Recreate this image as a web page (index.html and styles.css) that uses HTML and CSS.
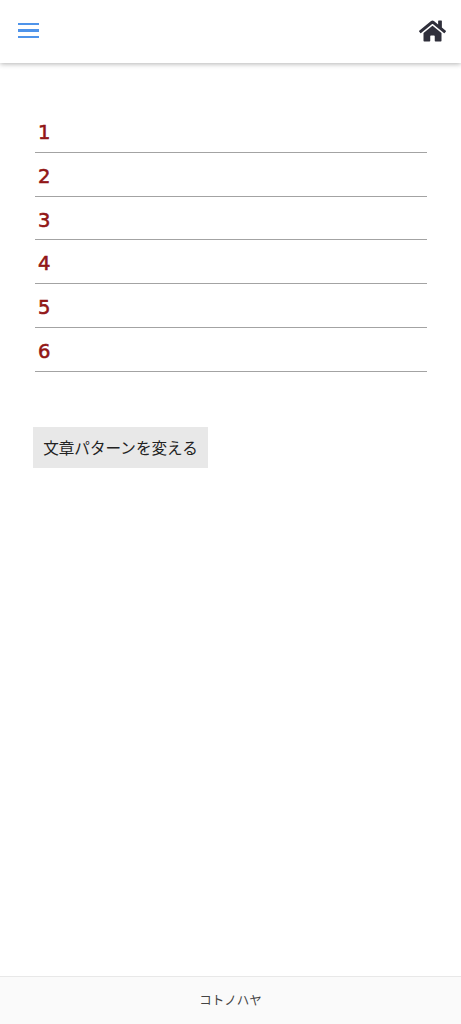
FILE: index.html
```html
<!DOCTYPE html>
<html lang="ja">
<head>
<meta charset="utf-8">
<title>コトノハヤ</title>
<link rel="stylesheet" href="styles.css">
</head>
<body>
<div class="page">
  <header class="topbar">
    <div class="burger"><span></span><span></span><span></span></div>
    <svg class="home" viewBox="0 0 576 512" aria-hidden="true"><path fill="#2f2f3b" d="M280.37 148.26L96 300.11V464a16 16 0 0 0 16 16l112.06-.29a16 16 0 0 0 15.92-16V368a16 16 0 0 1 16-16h64a16 16 0 0 1 16 16v95.64a16 16 0 0 0 16 16.05L464 480a16 16 0 0 0 16-16V300L295.67 148.26a12.19 12.19 0 0 0-15.3 0zM571.6 251.47L488 182.56V44.05a12 12 0 0 0-12-12h-56a12 12 0 0 0-12 12v72.61L318.47 43a48 48 0 0 0-61 0L4.34 251.47a12 12 0 0 0-1.6 16.9l25.5 31A12 12 0 0 0 45.15 301l235.22-193.74a12.19 12.19 0 0 1 15.3 0L530.9 301a12 12 0 0 0 16.9-1.6l25.5-31a12 12 0 0 0-1.7-16.93z"/></svg>
  </header>
  <main class="content">
    <ul class="list">
      <li>1</li>
      <li>2</li>
      <li>3</li>
      <li>4</li>
      <li>5</li>
      <li>6</li>
    </ul>
    <button class="change" type="button">文章パターンを変える</button>
  </main>
  <footer class="footer">コトノハヤ</footer>
</div>
</body>
</html>
```
FILE: styles.css
```css
* { box-sizing: border-box; }
html, body { margin: 0; padding: 0; height: 100%; }
body {
  background: #fff;
  color: #222;
  font-family: "Noto Sans", "Noto Sans CJK JP", sans-serif;
}
.page { display: flex; flex-direction: column; height: 1024px; overflow: hidden; }
.topbar {
  height: 63px;
  flex: none;
  display: flex;
  align-items: center;
  justify-content: space-between;
  padding: 0 15px 2px 18px;
  background: #fff;
  box-shadow: 0 1px 5px rgba(0,0,0,.3);
}
.burger { width: 21px; height: 15px; display: flex; flex-direction: column; justify-content: space-between; }
.burger span { height: 2.3px; background: #4f94ea; display: block; }
.home { width: 27px; height: 24px; display: block; }
.content { flex: 1; padding: 46px 34px 0 35px; }
.list { list-style: none; margin: 0; padding: 0; }
.list li {
  height: 43.8px;
  padding: 10px 0 0 3px;
  border-bottom: 1px solid #a3a3a3;
  color: #921616;
  font-family: "DejaVu Sans", sans-serif;
  font-size: 19.5px;
  font-weight: 400;
  -webkit-text-stroke: 0.6px #921616;
  line-height: 27px;
}
.change {
  display: block;
  margin: 55px 0 0 -2px;
  width: 175px;
  height: 41px;
  padding: 0;
  border: 0;
  background: #e8e8e8;
  color: #222;
  font: 15.6px/41px "Noto Sans CJK JP", sans-serif;
  text-align: center;
}
.footer {
  flex: none;
  height: 48px;
  border-top: 1px solid #e8e8e8;
  background: #fafafa;
  color: #444;
  font: 12.5px/45px "Noto Sans CJK JP", sans-serif;
  text-align: center;
}
```
